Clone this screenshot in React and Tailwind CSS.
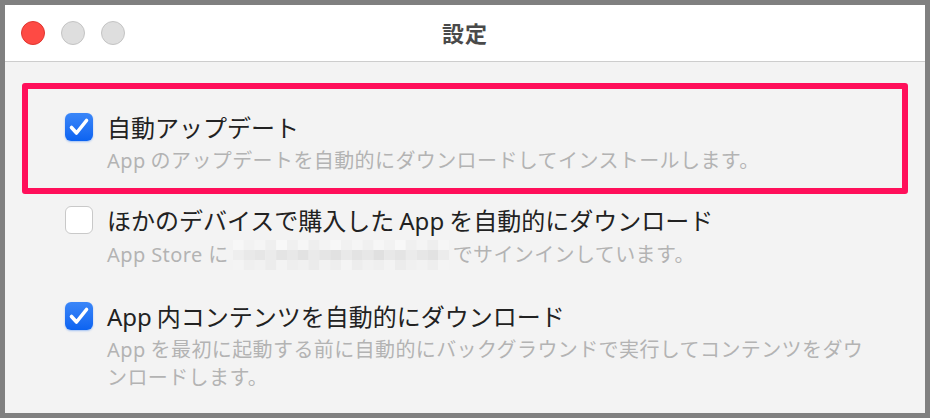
import React from "react";

const font = { fontFamily: '"Noto Sans", "Noto Sans CJK JP", sans-serif' };

const blurCells = [
  ["#f7f7f7", "#f2f2f2", "#f5f5f5", "#efefef", "#f8f8f8", "#f0f0f0", "#f6f6f6", "#eeeeee", "#f3f3f3", "#f7f7f7", "#f1f1f1", "#f5f5f5", "#f0f0f0", "#f6f6f6", "#f2f2f2", "#f8f8f8", "#f0f0f0", "#f4f4f4", "#eeeeee", "#f6f6f6"],
  ["#eeeeee", "#e9e9e9", "#e6e6e6", "#ebebeb", "#e4e4e4", "#e8e8e8", "#e2e2e2", "#eaeaea", "#e5e5e5", "#e1e1e1", "#e9e9e9", "#e3e3e3", "#e7e7e7", "#e0e0e0", "#e8e8e8", "#e4e4e4", "#ebebeb", "#e6e6e6", "#e2e2e2", "#ececec"],
  ["#f4f4f4", "#efefef", "#f1f1f1", "#ececec", "#f3f3f3", "#eeeeee", "#f0f0f0", "#ebebeb", "#f2f2f2", "#eeeeee", "#f4f4f4", "#ededed", "#f1f1f1", "#efefef", "#f3f3f3", "#ececec", "#f0f0f0", "#f2f2f2", "#eeeeee", "#f4f4f4"],
];

function Blurred() {
  return (
    <svg width="216" height="30" viewBox="0 0 216 30" className="mx-[4px] inline-block align-middle">
      {blurCells.map((row, r) =>
        row.map((c, i) => (
          <rect key={`${r}-${i}`} x={i * 10.8} y={r * 10} width="10.9" height="10.1" fill={c} />
        ))
      )}
    </svg>
  );
}

function Checkbox({ checked }) {
  if (!checked) {
    return (
      <div className="w-[28px] h-[28px] shrink-0 rounded-[6px] bg-white border border-[#c9c9c9]" />
    );
  }
  return (
    <div className="w-[28px] h-[28px] shrink-0 rounded-[6px] bg-gradient-to-b from-[#3a86f8] to-[#0b63f1] flex items-center justify-center shadow-[0_1px_2px_rgba(11,99,241,0.35)]">
      <svg width="28" height="28" viewBox="0 0 28 28">
        <path
          d="M6.5 14.5 L11.5 20 L21.5 7.5"
          fill="none"
          stroke="white"
          strokeWidth="3.6"
          strokeLinecap="round"
          strokeLinejoin="round"
        />
      </svg>
    </div>
  );
}

function SettingRow({ checked, title, children }) {
  return (
    <div className="flex flex-row items-start">
      <Checkbox checked={checked} />
      <div className="flex flex-col pl-[14px]">
        <div className="text-[24px] leading-[30px] text-[#222222]">{title}</div>
        <div className="mt-[4px] text-[20px] leading-[28px] tracking-[0.4px] text-[#b3b3b3]">{children}</div>
      </div>
    </div>
  );
}

export default function App() {
  return (
    <div className="w-[930px] h-[418px] bg-[#808080] p-[5px]" style={font}>
      <div className="w-[920px] h-[408px] flex flex-col bg-[#f3f3f3]">
        <div className="h-[57px] shrink-0 bg-white border-b border-[#cdcdcd] relative flex items-center justify-center">
          <div className="absolute left-[16px] top-[16px] flex flex-row gap-[16px]">
            <div className="w-[24px] h-[24px] rounded-full bg-[#fe4a44] border border-[#e0352f]" />
            <div className="w-[24px] h-[24px] rounded-full bg-[#dedede] border border-[#c4c4c4]" />
            <div className="w-[24px] h-[24px] rounded-full bg-[#dedede] border border-[#c4c4c4]" />
          </div>
          <div className="text-[22px] font-bold text-[#4a4a4a] tracking-[1px]">設定</div>
        </div>

        <div className="flex flex-col pt-[21px]">
          <div className="mx-[17px] border-[6px] border-[#ff0f5a] rounded-[3px] pt-[24px] pb-[13px] pl-[37px]">
            <SettingRow checked title="自動アップデート">
              <span className="mr-[5px]">App</span>のアップデートを自動的にダウンロードしてインストールします。
            </SettingRow>
          </div>

          <div className="mt-[12px] pl-[60px]">
            <SettingRow
              checked={false}
              title={
                <>
                  ほかのデバイスで購入した<span className="inline-block mx-[5px]">App</span>を自動的にダウンロード
                </>
              }
            >
              <span className="inline-flex items-center">
                App Store に<Blurred />でサインインしています。
              </span>
            </SettingRow>
          </div>

          <div className="mt-[32px] pl-[60px] pr-[50px]">
            <SettingRow
              checked
              title={
                <>
                  <span className="inline-block mr-[5px]">App</span>内コンテンツを自動的にダウンロード
                </>
              }
            >
              <span className="inline-block mr-[5px]">App</span>を最初に起動する前に自動的にバックグラウンドで実行してコンテンツをダウ
              <br />
              ンロードします。
            </SettingRow>
          </div>
        </div>
      </div>
    </div>
  );
}
